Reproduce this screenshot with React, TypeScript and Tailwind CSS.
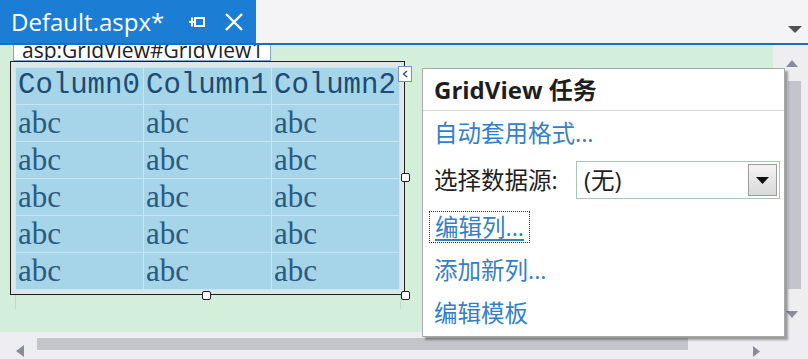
const ui = "font-['Open_Sans','Noto_Sans_CJK_SC',sans-serif]";

const rows = [0, 1, 2, 3, 4];

function Handle({ className }: { className: string }) {
  return <div className={`absolute w-[9px] h-[9px] bg-white border-[1.5px] border-[#222] rounded-[2px] ${className}`} />;
}

function TaskPanel() {
  return (
    <div
      className={`absolute left-[422px] top-[68px] w-[363px] h-[269px] bg-white border border-[#a8a8a8] shadow-[3px_3px_2px_rgba(0,0,0,0.35)] flex flex-col ${ui}`}
    >
      <div className="h-[42px] shrink-0 flex items-center px-[11px] border-b border-[#d8d8d8] text-[24px] font-bold text-[#1e1e1e]">
        GridView 任务
      </div>
      <div className="h-[45px] flex items-center px-[11px] text-[23.5px] text-[#3480c8]">自动套用格式...</div>
      <div className="h-[50px] flex items-center pl-[11px] pr-[4px] text-[23.5px] text-[#1e1e1e]">
        <span>选择数据源:</span>
        <div className="ml-auto w-[204px] h-[38px] border border-[#a9c7b2] bg-white flex items-center p-[2px]">
          <span className="pl-[5px] flex-1">(无)</span>
          <div className="w-[29px] h-full border border-[#9c9c9c] bg-gradient-to-b from-[#f4f4f4] to-[#d9d9d9] flex items-center justify-center">
            <svg width="13" height="7" viewBox="0 0 13 7">
              <path d="M0 0H13L6.5 7Z" fill="#111" />
            </svg>
          </div>
        </div>
      </div>
      <div className="h-[45px] flex items-center px-[6px]">
        <span className="border border-dotted border-[#333] px-[5px] text-[23.5px] leading-[30px] text-[#3480c8] underline underline-offset-[3px]">
          编辑列...
        </span>
      </div>
      <div className="h-[42px] flex items-center px-[11px] text-[23.5px] text-[#3480c8]">添加新列...</div>
      <div className="h-[45px] flex items-center px-[11px] text-[23.5px] text-[#3480c8]">编辑模板</div>
    </div>
  );
}

export default function App() {
  return (
    <div className={`relative w-[808px] h-[359px] overflow-hidden bg-[#eeeef2] flex flex-col ${ui}`}>
      {/* document tab strip */}
      <div className="h-[43px] shrink-0 flex bg-[#f4f4f6]">
        <div className="w-[256px] bg-[#1b7dd3] flex items-center pl-[11px] pr-[12px] text-white">
          <span className="text-[24px] leading-none">Default.aspx*</span>
          <svg className="ml-auto" width="18" height="12" viewBox="0 0 18 12">
            <path d="M1 6H7M4 1.5V10.5" stroke="white" strokeWidth="2" fill="none" />
            <rect x="7" y="2" width="9" height="8" stroke="white" strokeWidth="2" fill="none" />
          </svg>
          <svg className="ml-[18px]" width="20" height="20" viewBox="0 0 20 20">
            <path d="M2 2L18 18M18 2L2 18" stroke="white" strokeWidth="2.4" />
          </svg>
        </div>
        <div className="flex-1 flex justify-end items-end pb-[10px] pr-[6px]">
          <svg width="14" height="7" viewBox="0 0 14 7">
            <path d="M0 0H14L7 7Z" fill="#505050" />
          </svg>
        </div>
      </div>
      <div className="h-[2px] shrink-0 bg-[#1b6fc3]" />

      <div className="flex flex-1 min-h-0">
        {/* design surface */}
        <div className="flex-1 bg-[#d3efdb] relative pl-[10px]">
          <div className="ml-[3px] w-[258px] h-[16px] overflow-hidden bg-white border-x border-b border-[#8aa3c4]">
            <div className="-mt-[7px] pl-[8px] text-[21px] leading-[24px] text-[#222]">asp:GridView#GridView1</div>
          </div>
          <div className="relative w-[395px] h-[234px] border-[1.5px] border-[#1f1f1f] bg-[#dfe6e7] pt-[5px] pl-[4px]">
            <table className="border-collapse bg-[#a6d5ea] text-[#2a5b80]">
              <thead>
                <tr className="h-[37px]">
                  {["Column0", "Column1", "Column2"].map((c) => (
                    <th
                      key={c}
                      className="w-[128px] p-0 pl-[2px] text-left font-normal border border-[#c6e6f4] font-['Liberation_Mono',monospace] text-[29px] leading-[36px] text-[#1d4c74]"
                    >
                      {c}
                    </th>
                  ))}
                </tr>
              </thead>
              <tbody>
                {rows.map((r) => (
                  <tr key={r} className="h-[37px]">
                    {[0, 1, 2].map((c) => (
                      <td
                        key={c}
                        className="p-0 pl-[2px] border border-[#c6e6f4] font-['Liberation_Serif',serif] text-[31px] leading-[36px]"
                      >
                        abc
                      </td>
                    ))}
                  </tr>
                ))}
              </tbody>
            </table>
            <Handle className="right-[-6px] top-[111px]" />
            <Handle className="left-[191px] bottom-[-6px]" />
            <Handle className="right-[-6px] bottom-[-6px]" />
          </div>
          <div className="ml-[5px] w-[386px] h-[14px] border-x border-[#bcdcc6]" />
          {/* smart tag glyph */}
          <div className="absolute left-[398px] top-[21px] w-[14px] h-[16px] bg-white border border-[#7393c4] flex items-center justify-center">
            <svg width="6" height="8" viewBox="0 0 6 8">
              <path d="M5 1L1.5 4L5 7" stroke="#33507a" strokeWidth="1.4" fill="none" />
            </svg>
          </div>
        </div>

        {/* vertical scrollbar */}
        <div className="w-[35px] bg-[#eeeef1] flex flex-col items-center pt-[15px] pb-[10px]">
          <svg width="12" height="7" viewBox="0 0 12 7" className="ml-[2px]">
            <path d="M0 7H12L6 0Z" fill="#8a8c98" />
          </svg>
          <div className="mt-[14px] ml-[8px] w-[13px] h-[208px] bg-[#c4c5cb]" />
          <svg width="12" height="7" viewBox="0 0 12 7" className="mt-auto ml-[2px] mb-[4px]">
            <path d="M0 0H12L6 7Z" fill="#8a8c98" />
          </svg>
        </div>
      </div>

      {/* horizontal scrollbar */}
      <div className="h-[27px] shrink-0 bg-[#eeeef2] flex items-start pl-[16px] pt-[6px]">
        <svg width="8" height="12" viewBox="0 0 8 12" className="mt-[7px]">
          <path d="M8 0V12L0 6Z" fill="#8a8c98" />
        </svg>
        <div className="ml-[13px] w-[651px] h-[12px] bg-[#c4c5cb]" />
        <svg width="7" height="11" viewBox="0 0 7 11" className="ml-[65px] mt-[8px]">
          <path d="M0 0V11L7 5.5Z" fill="#8a8c98" />
        </svg>
      </div>

      <TaskPanel />
    </div>
  );
}
